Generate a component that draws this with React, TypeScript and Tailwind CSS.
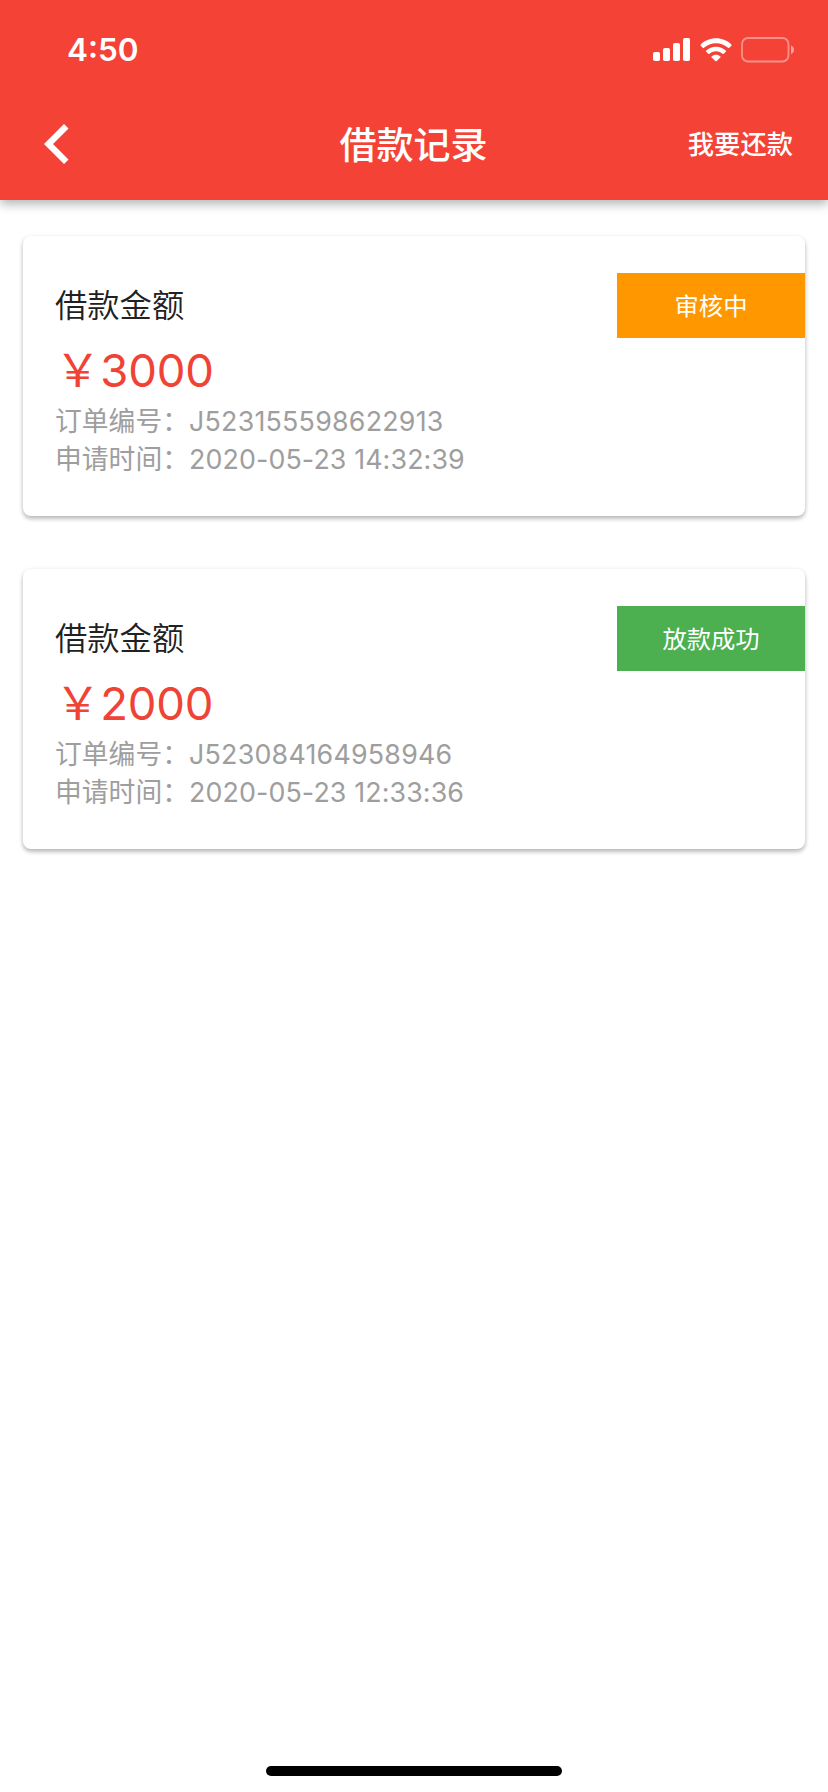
import { memo } from 'react'
import clsx from 'clsx'

type LoanStatus = 'reviewing' | 'paid'

interface LoanRecord {
  orderNo: string
  amount: number
  appliedAt: string
  status: LoanStatus
}

const records: LoanRecord[] = [
  { orderNo: 'J523155598622913', amount: 3000, appliedAt: '2020-05-23 14:32:39', status: 'reviewing' },
  { orderNo: 'J523084164958946', amount: 2000, appliedAt: '2020-05-23 12:33:36', status: 'paid' },
]

const statusStyles = {
  reviewing: { label: '审核中', className: 'bg-[#ff9800]' },
  paid: { label: '放款成功', className: 'bg-[#4caf50]' },
}

function StatusBar() {
  return (
    <div className="flex h-[88px] items-start justify-between pt-[29px] pr-[34px] pl-[67px]">
      <span className="text-[31.5px] leading-[42px] font-semibold">4:50</span>
      <div className="flex items-center pt-[8px]">
        {/* Signal */}
        <svg width="38" height="24" viewBox="0 0 38 24" fill="currentColor">
          <rect x="0" y="14" width="7" height="9" rx="1.8" />
          <rect x="10" y="10" width="7" height="13" rx="1.8" />
          <rect x="20" y="5" width="7" height="18" rx="1.8" />
          <rect x="30" y="0" width="7" height="23" rx="1.8" />
        </svg>
        {/* Wifi */}
        <svg className="ml-[9px]" width="32" height="24" viewBox="0 0 33 24" fill="currentColor">
          <path d="M16.5 0C22.6 0 28.2 2.4 32.3 6.3Q33 7 32.3 7.7L30.2 9.8Q29.6 10.4 28.9 9.8C25.6 6.8 21.3 5 16.5 5S7.4 6.8 4.1 9.8Q3.4 10.4 2.8 9.8L.7 7.7Q0 7 .7 6.3C4.8 2.4 10.4 0 16.5 0Z" />
          <path d="M16.5 8.6C20.4 8.6 23.9 10 26.6 12.4Q27.3 13.1 26.6 13.8L24.5 15.9Q23.9 16.5 23.2 15.9C21.4 14.4 19.1 13.4 16.5 13.4S11.6 14.4 9.8 15.9Q9.1 16.5 8.5 15.9L6.4 13.8Q5.7 13.1 6.4 12.4C9.1 10 12.6 8.6 16.5 8.6Z" />
          <path d="M16.5 17C18.2 17 19.8 17.6 21 18.6Q21.6 19.2 21 19.8L17.2 23.3Q16.5 23.9 15.8 23.3L12 19.8Q11.4 19.2 12 18.6C13.2 17.6 14.8 17 16.5 17Z" />
        </svg>
        {/* Battery */}
        <svg className="ml-[9px]" width="53" height="26" viewBox="0 0 53 26" fill="none">
          <rect x="1" y="1" width="46.5" height="23.5" rx="6" stroke="currentColor" strokeWidth="1.8" opacity="0.42" />
          <path d="M50 8.5C52 9.3 53 11 53 12.8S52 16.3 50 17Z" fill="currentColor" opacity="0.5" />
        </svg>
      </div>
    </div>
  )
}

function AppBar() {
  return (
    <div className="grid h-[112px] grid-cols-[1fr_auto_1fr] items-center pr-[35px] pl-[44px]">
      <button className="justify-self-start" aria-label="返回">
        <svg width="26" height="40" viewBox="0 0 26 40" fill="currentColor">
          <path d="M20 0L24.5 4.5L9 20L24.5 35.5L20 40L0 20Z" />
        </svg>
      </button>
      <h1 className="pt-[4px] pr-[10px] text-[37px] leading-[52px] font-medium">借款记录</h1>
      <button className="justify-self-end pt-[2px] text-[26.3px] leading-[38px] font-medium">我要还款</button>
    </div>
  )
}

function LoanCard({ record }: { record: LoanRecord }) {
  const status = statusStyles[record.status]

  return (
    <li className="flex h-[280px] items-start justify-between rounded-[8px] bg-white pl-[32px] shadow-[0_3px_4px_rgba(0,0,0,0.22),0_1px_5px_rgba(0,0,0,0.1)]">
      <div className="pt-[47px]">
        <h2 className="text-[32.3px] leading-[46px] font-[350] text-[#212121]">借款金额</h2>
        <p className="mt-[10px] text-[45.5px] leading-[63px] tracking-[-0.2px] text-[#ef4336]">￥{record.amount}</p>
        <p className="text-[26.8px] leading-[38px] text-[#9e9e9e]">
          订单编号：<span className="tracking-[0.24px]">{record.orderNo}</span>
        </p>
        <p className="text-[26.8px] leading-[38px] text-[#9e9e9e]">
          申请时间：<span className="tracking-[0.12px]">{record.appliedAt}</span>
        </p>
      </div>
      <span
        className={clsx(
          'mt-[37px] flex h-[65px] w-[188px] items-center justify-center pt-[2px] text-[24.3px] text-white',
          status.className
        )}
      >
        {status.label}
      </span>
    </li>
  )
}

const MemoLoanCard = memo(LoanCard)

export default function App() {
  return (
    <div className="flex h-[1792px] w-[828px] flex-col bg-white font-[Inter,'Noto_Sans_CJK_SC',sans-serif]">
      <header className="h-[200px] bg-[#f44336] text-white shadow-[0_4px_10px_rgba(0,0,0,0.3)]">
        <StatusBar />
        <AppBar />
      </header>

      <main className="flex-1 px-[23px] pt-[36px]">
        <ul className="flex flex-col gap-[53px]">
          {records.map((record) => (
            <MemoLoanCard key={record.orderNo} record={record} />
          ))}
        </ul>
      </main>

      {/* Home indicator */}
      <div className="mb-[16px] h-[10px] w-[296px] self-center rounded-full bg-black" />
    </div>
  )
}
